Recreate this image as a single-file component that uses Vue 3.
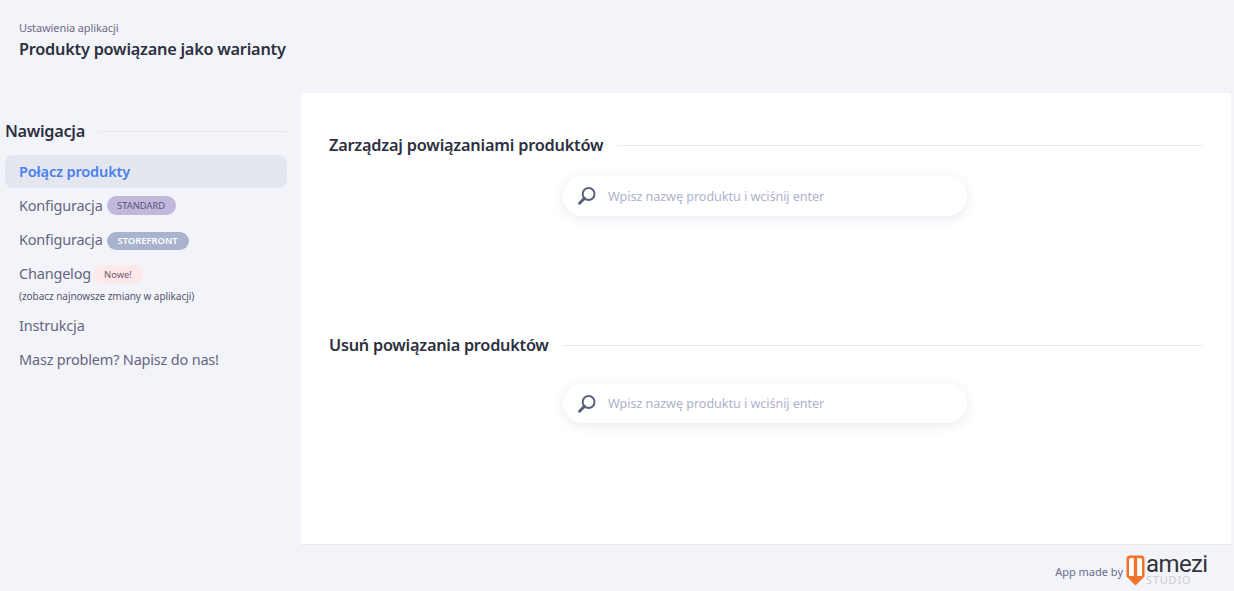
<script setup>
const sections = [
  { title: 'Zarządzaj powiązaniami produktów', cls: 'first' },
  { title: 'Usuń powiązania produktów', cls: 'second' }
]
</script>

<template>
  <div class="page">
    <header class="head">
      <div class="sub">Ustawienia aplikacji</div>
      <h1>Produkty powiązane jako warianty</h1>
    </header>
    <div class="layout">
      <aside class="side">
        <div class="side-title"><span>Nawigacja</span><i></i></div>
        <nav>
          <a class="item active">Połącz produkty</a>
          <a class="item">Konfiguracja <b class="badge std">STANDARD</b></a>
          <a class="item">Konfiguracja <b class="badge store">STOREFRONT</b></a>
          <a class="item multi">
            <span class="row">Changelog <b class="badge new">Nowe!</b></span>
            <small>(zobacz najnowsze zmiany w aplikacji)</small>
          </a>
          <a class="item">Instrukcja</a>
          <a class="item">Masz problem? Napisz do nas!</a>
        </nav>
      </aside>
      <main class="content">
        <section v-for="s in sections" :key="s.title" :class="['sec', s.cls]">
          <div class="sec-title"><span>{{ s.title }}</span><i></i></div>
          <div class="search">
            <svg width="20" height="20" viewBox="0 0 20 20" fill="none">
              <circle cx="11.6" cy="8" r="5.9" stroke="#5b6079" stroke-width="2" />
              <path d="M7.4 12.4 2.6 17.2" stroke="#5b6079" stroke-width="3" stroke-linecap="round" />
            </svg>
            <span>Wpisz nazwę produktu i wciśnij enter</span>
          </div>
        </section>
      </main>
    </div>
    <footer class="foot">
      <span>App made by</span>
      <div class="logo">
        <svg width="19" height="31" viewBox="0 0 19 31" fill="none">
          <path d="M.5 4Q.5 .5 4 .5H15Q18.5 .5 18.5 4V21.5L9.5 30.5 .5 21.5Z" fill="#f0732c" />
          <path d="M3 5Q3 3 5 3H7.8V21H3ZM11.2 3H14Q16 3 16 5V21H11.2Z" fill="#fff" />
        </svg>
        <div class="word">amezi</div>
        <div class="studio">STUDIO</div>
      </div>
    </footer>
  </div>
</template>

<style>
html, body { margin: 0; background: #f3f4f9; }
</style>

<style scoped>
.page {
  width: 1234px;
  height: 591px;
  overflow: hidden;
  background: #f3f4f9;
  font-family: "Noto Sans", "Open Sans", sans-serif;
  color: #66667f;
}
.head { height: 93px; box-sizing: border-box; padding: 20px 0 0 19px; }
.sub { font-size: 11px; line-height: 16px; color: #6f6a85; letter-spacing: -.1px; }
h1 { margin: 2px 0 0; font-size: 16.3px; line-height: 22px; font-weight: 600; color: #2c3040; letter-spacing: -.23px; }
.layout { display: flex; height: 452px; }
.side { width: 301px; box-sizing: border-box; padding: 27px 14px 0 5px; }
.side-title { display: flex; align-items: center; gap: 14px; font-size: 16.3px; line-height: 22px; font-weight: 600; color: #2c3040; letter-spacing: -.3px; }
.side-title i, .sec-title i { flex: 1; height: 1px; background: #e8e9f0; }
nav { display: flex; flex-direction: column; margin-top: 13px; }
.item { display: flex; align-items: center; height: 34px; padding-left: 14px; padding-bottom: 1px; box-sizing: border-box; font-size: 14.5px; color: #66667f; gap: 4px; letter-spacing: -.2px; }
.item.active { height: 33px; padding-bottom: 2px; background: #e4e6f0; border-radius: 8px; color: #4a7ff0; font-weight: 600; letter-spacing: -.15px; }
.multi { display: block; height: auto; padding-top: 6px; padding-bottom: 5px; }
.row { display: flex; align-items: center; gap: 2px; height: 22px; }
small { display: block; font-size: 10px; line-height: 14px; margin-top: 5px; color: #55566e; letter-spacing: -.05px; }
.badge { display: inline-flex; align-items: center; justify-content: center; height: 19px; border-radius: 10px; font-size: 9.4px; font-weight: 400; letter-spacing: 0; }
.std { width: 69px; margin-top: 2px; background: #c1b8db; color: #5c5578; }
.store { width: 82px; height: 18px; margin-top: 4px; background: #a9b3cd; color: #fff; font-weight: 600; }
.new { width: 50px; margin-top: 2px; background: #fde8ea; color: #75586a; }
.content { width: 930px; background: #fff; box-sizing: border-box; padding: 0 28px; border-bottom: 1px solid #e8e9f0; }
.sec { display: flex; flex-direction: column; align-items: center; height: 200px; box-sizing: border-box; padding-top: 41px; }
.sec-title { width: 100%; display: flex; align-items: center; gap: 14px; font-size: 16.3px; line-height: 22px; font-weight: 600; color: #2c3040; letter-spacing: -.2px; }
.second .sec-title { letter-spacing: -.25px; }
.search { width: 404px; height: 40px; margin: 20px 3px 0 0; border-radius: 20px; background: #fff; box-shadow: 0 2px 12px rgba(90, 100, 150, .14); display: flex; align-items: center; box-sizing: border-box; padding-left: 14px; gap: 11.5px; font-size: 12.6px; color: #aeb2cc; letter-spacing: -.05px; }
.second .search { height: 39px; margin-top: 28px; }
.foot { display: flex; justify-content: flex-end; align-items: center; height: 46px; padding-right: 28px; gap: 3px; font-size: 11px; color: #6a6d8c; }
.foot > span { position: relative; top: 3px; }
.logo { position: relative; width: 80px; height: 36px; top: 2px; }
.logo svg { position: absolute; left: 0; top: 3px; }
.word { position: absolute; left: 20px; top: 3px; font-family: "Roboto", sans-serif; font-size: 24px; line-height: 18px; color: #33343a; letter-spacing: -.6px; }
.studio { position: absolute; left: 20px; top: 21px; font-size: 11px; line-height: 13px; letter-spacing: .8px; color: #cfcfcf; }
</style>
